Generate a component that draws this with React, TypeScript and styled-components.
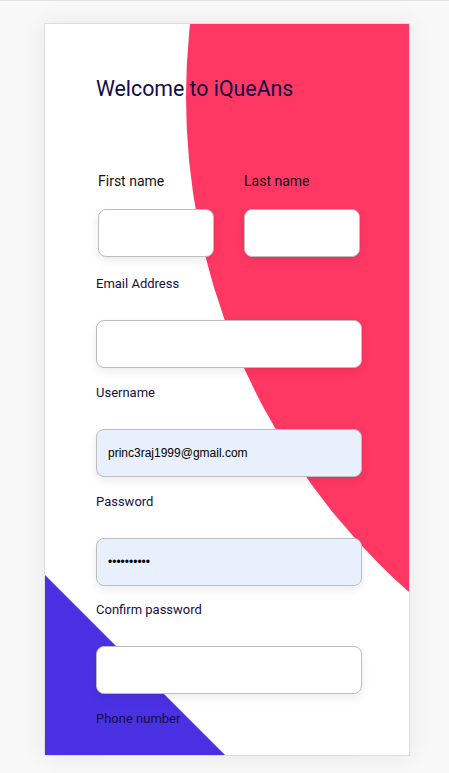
import React from "react";
import styled, { createGlobalStyle } from "styled-components";

const Global = createGlobalStyle`
  html, body { margin: 0; padding: 0; }
  body {
    background: #f8f8f8;
    font-family: Roboto, "Liberation Sans", Arial, sans-serif;
    height: 773px;
    overflow: hidden;
  }
`;

const Page = styled.div`
  border-top: 1px solid #e3e3e3;
  height: 772px;
  box-sizing: border-box;
  padding: 22px 0 0 44px;
`;

const Card = styled.div`
  position: relative;
  width: 366px;
  height: 733px;
  box-sizing: border-box;
  border: 1px solid #dedede;
  background: #ffffff;
  overflow: hidden;
  box-shadow: 0 0 22px rgba(0, 0, 0, 0.07);
`;

const RedBlob = styled.div`
  position: absolute;
  left: 141px;
  top: -588px;
  width: 1322px;
  height: 1322px;
  border-radius: 50%;
  background: #ff3763;
`;

const BlueWedge = styled.div`
  position: absolute;
  left: 0;
  bottom: 0;
  width: 180px;
  height: 180px;
  background: #4a32e4;
  clip-path: polygon(0 0, 100% 100%, 0 100%);
`;

const Form = styled.form`
  position: relative;
  display: flex;
  flex-direction: column;
  padding: 52px 0 0 51px;
  width: 266px;
`;

const Title = styled.h1`
  margin: 0 0 72px 0;
  font-family: Roboto, "Liberation Sans", sans-serif;
  font-size: 21.3px;
  line-height: 25px;
  font-weight: 400;
  color: #110c47;
`;

const NameRow = styled.div`
  display: flex;
  gap: 30px;
  padding-left: 2px;
  margin-bottom: 19px;
`;

const NameCol = styled.div`
  display: flex;
  flex-direction: column;
  width: 116px;
`;

const NameLabel = styled.label`
  font-size: 14px;
  line-height: 16px;
  color: #141414;
  margin-bottom: 20px;
`;

const Field = styled.div<{ $gapAfter?: number }>`
  display: flex;
  flex-direction: column;
  margin-bottom: ${(p) => p.$gapAfter ?? 17}px;
`;

const Label = styled.label`
  font-size: 13px;
  line-height: 16px;
  color: #130f45;
  margin-bottom: 28px;
`;

const Input = styled.input<{ $filled?: boolean }>`
  box-sizing: border-box;
  width: 100%;
  height: 48px;
  border: 1px solid #bdbdbd;
  border-radius: 8px;
  background: ${(p) => (p.$filled ? "#e8f0fe" : "#ffffff")};
  box-shadow: 0 4px 10px rgba(0, 0, 0, 0.08);
  padding: 0 11px;
  font-family: "Liberation Sans", Arial, sans-serif;
  font-size: 12px;
  color: #000;
  outline: none;
`;

export default function App() {
  return (
    <>
      <Global />
      <Page>
        <Card>
          <RedBlob />
          <BlueWedge />
          <Form onSubmit={(e) => e.preventDefault()}>
            <Title>Welcome to iQueAns</Title>
            <NameRow>
              <NameCol>
                <NameLabel>First name</NameLabel>
                <Input type="text" />
              </NameCol>
              <NameCol>
                <NameLabel>Last name</NameLabel>
                <Input type="text" />
              </NameCol>
            </NameRow>
            <Field>
              <Label>Email Address</Label>
              <Input type="email" />
            </Field>
            <Field>
              <Label>Username</Label>
              <Input type="text" $filled defaultValue="princ3raj1999@gmail.com" />
            </Field>
            <Field $gapAfter={16}>
              <Label>Password</Label>
              <Input type="password" $filled defaultValue="1234567890" />
            </Field>
            <Field>
              <Label>Confirm password</Label>
              <Input type="password" />
            </Field>
            <Field>
              <Label>Phone number</Label>
              <Input type="tel" />
            </Field>
          </Form>
        </Card>
      </Page>
    </>
  );
}
